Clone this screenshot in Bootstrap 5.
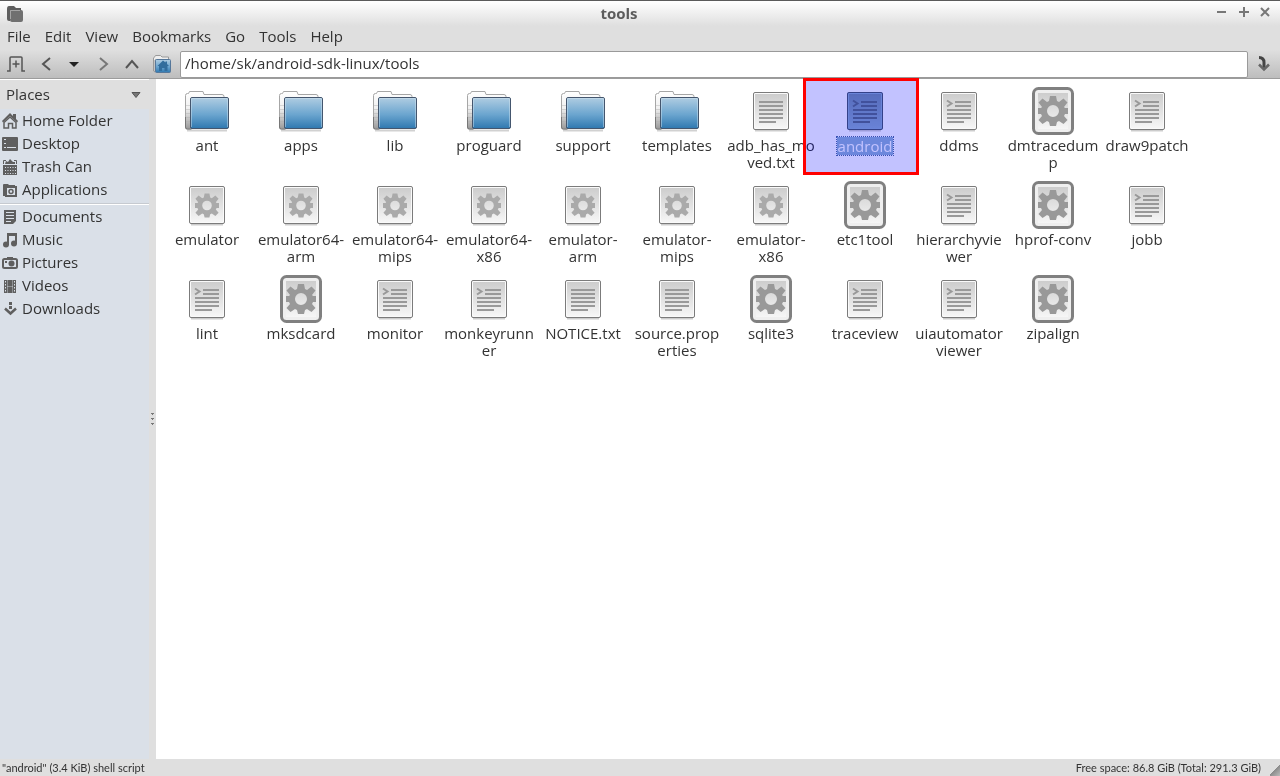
<!DOCTYPE html>
<html lang="en">
<head>
<meta charset="utf-8">
<meta name="viewport" content="width=device-width, initial-scale=1">
<title>tools</title>
<link href="https://cdn.jsdelivr.net/npm/bootstrap@5.3.0/dist/css/bootstrap.min.css" rel="stylesheet">
<style>
body { font-family: "Open Sans", "Noto Sans", sans-serif; font-size: 15px; line-height: 17px; color: #333; background: #dfdfdf; }
svg { display: block; flex: none; }
a, button { color: inherit; text-decoration: none; }
.titlebar { height: 26px; border-top: 1px solid #5a5a5a; background: linear-gradient(#fff, #dfdfdf); color: #5c5c5c; }
.titlebar h1 { font-size: 15px; line-height: 22px; padding-bottom: 2px; font-weight: 700; }
.app-icon { width: 32px; padding-left: 7px; }
.window-btns { width: 74px; column-gap: 8px; padding-right: 8px; }
.plain-btn { border: 0; background: none; padding: 0; }
.menubar { height: 24px; padding: 0 0 4px 7px; column-gap: 14px; }
.menubar .nav-link { padding: 0; color: #333; line-height: 20px; }
.toolbar { height: 29px; background: linear-gradient(#dfdfdf, #bdbdbd); border-bottom: 1px solid #9c9c9c; color: #555; }
.tool-btn { width: 32px; display: flex; justify-content: center; }
.tool-btn.narrow { width: 24px; }
.tool-btn.wide { width: 36px; }
.path-input { height: 27px; border: 1px solid #9a9a9a; border-radius: 2px; padding: 0 4px 2px; font-size: 15px; color: #333; background: #fff; min-width: 0; }
.workspace { min-height: 0; }
.sidebar { width: 149px; background: #dae0e8; }
.places-head { height: 30px; background: #dfdfdf; padding: 0 8px 0 6px; border-top: 1px solid #fff; }
.place-link { height: 23px; padding-left: 2px; column-gap: 4px; }
.place-sep { height: 2px; margin: 2px 0 0; border-top: 1px solid #c6cad0; border-bottom: 1px solid #fff; }
.place-link svg, .head-arrow { color: #5f5f5f; }
.split-handle { width: 7px; background: #dfdfdf; color: #777; }
.file-area { background: #fff; padding: 8px 0 0 4px; min-width: 0; }
.file-grid { display: grid; grid-template-columns: repeat(auto-fill, 94px); grid-auto-rows: 94px; align-content: start; }
.file-item { text-align: center; color: #333; }
.file-item .caption { display: inline-block; margin-top: 2px; white-space: nowrap; }
.file-item.selected .caption { background: #8fb2d1; color: #fff; outline: 1px dotted #4a6a9c; padding: 0 1px; line-height: 18px; }
.tint { fill: #8fb2d1; mix-blend-mode: multiply; }
.highlight-box { position: absolute; inset: -9px -7px 6px -15px; border: 3px solid #f00; background: rgba(0, 0, 255, .24); background-clip: padding-box; pointer-events: none; }
.statusbar { height: 17px; font-family: Lato, "Open Sans", sans-serif; font-size: 11px; line-height: 17px; padding-left: 2px; }
.grip { width: 11px; height: 11px; background: linear-gradient(135deg, transparent 50%, #8c8c8c 50%, #bbb); margin-left: 8px; }
</style>
</head>
<body class="vh-100 d-flex flex-column overflow-hidden">

<svg width="0" height="0" class="position-absolute" aria-hidden="true">
  <defs>
    <linearGradient id="blue" x1="0" y1="0" x2="0" y2="1"><stop offset="0" stop-color="#b0cde2"/><stop offset=".55" stop-color="#6ba5cf"/><stop offset="1" stop-color="#2f78b0"/></linearGradient>
    <linearGradient id="paper" x1="0" y1="0" x2="0" y2="1"><stop offset="0" stop-color="#cdcdcd"/><stop offset="1" stop-color="#f6f6f6"/></linearGradient>
    <linearGradient id="tabs" x1="0" y1="0" x2="0" y2="1"><stop offset="0" stop-color="#fff"/><stop offset=".45" stop-color="#f0f0f0"/><stop offset="1" stop-color="#999"/></linearGradient>
    <path id="cog" fill-rule="evenodd" d="M-3-15h6l1 5 2 1 4.500-3.500 4 4L11-4l1 1h3v6h-3l-1 2 3.500 4-4 4L6 10l-2 1-1 4h-6l-1-4-2-1-4.500 3-4-4 3.500-4-1-2h-3v-6h3l1-1-3.500-4.500 4-4L-6-9l2-1zM0-6a6 6 0 1 0 0 12A6 6 0 1 0 0-6z"/>
    <symbol id="folder" viewBox="0 0 48 48">
      <path d="M4 43.500h40" stroke="#000" stroke-opacity=".18" stroke-width="2"/>
      <path d="M2.500 41V8.500q0-2 2-2h1l1-2H20l1 3h18q2 0 2 2V12H9v30H4q-1.500 0-1.500-1z" fill="url(#tabs)" stroke="#a6a6a6"/>
      <path d="M3 18.500h4M3 22.500h4M3 26.500h4M3 30.500h4M3 34.500h4" stroke="#aaa" stroke-opacity=".4"/>
      <path d="M2.500 30v10q0 2 2 2H8" fill="none" stroke="#777"/>
      <rect x="7.500" y="10.500" width="38" height="31" rx="1.500" fill="url(#blue)" stroke="#44566e"/>
      <path d="M8.500 40V11.500h36V40" fill="none" stroke="#d5e6f2" stroke-opacity=".45"/>
    </symbol>
    <symbol id="sheet" viewBox="0 0 48 48">
      <path d="M8 43.500h32" stroke="#000" stroke-opacity=".2" stroke-width="2"/>
      <rect x="6.500" y="5.500" width="35" height="37" rx="1.500" fill="#fafafa" stroke="#7b7b7b"/>
      <rect x="8" y="7" width="32" height="34" fill="url(#paper)"/>
    </symbol>
    <symbol id="text" viewBox="0 0 48 48"><use href="#sheet"/>
      <path d="M12 15h24M12 19h24M12 23h24M12 27h24M12 31h24M12 35h17" stroke="#999" stroke-width="2"/></symbol>
    <symbol id="script" viewBox="0 0 48 48"><use href="#sheet"/>
      <path d="M20 15h16M20 19h16M12 23h24M12 27h24M12 31h24M12 35h17" stroke="#999" stroke-width="2"/>
      <path d="M12 13.500l4.500 3-4.500 3" fill="none" stroke="#999" stroke-width="2"/></symbol>
    <symbol id="binary" viewBox="0 0 48 48"><use href="#sheet"/>
      <use href="#cog" transform="translate(24 24.500) scale(.8)" fill="#aaa"/></symbol>
    <symbol id="exec" viewBox="0 0 48 48">
      <rect x="4.500" y="1.500" width="39" height="45" rx="5" fill="#efefef" stroke="#808080" stroke-width="3"/>
      <rect x="9" y="6" width="30" height="36" fill="url(#paper)"/>
      <use href="#cog" transform="translate(24 24)" fill="#999"/></symbol>
  </defs>
</svg>

<header>
  <div class="titlebar d-flex align-items-center justify-content-between">
    <div class="app-icon">
      <svg width="16" height="16" viewBox="0 0 16 16"><path d="M0 3q0-3 2-3h5l2 2h5v2H5q-2 0-2 2v9H2q-2 0-2-2z" fill="#5e5e5e"/><rect x="3" y="4" width="13" height="12" rx="2" fill="#707070"/><path d="M3.500 13V4.500H13" fill="none" stroke="#a5a5a5"/></svg>
    </div>
    <h1 class="m-0">tools</h1>
    <div class="window-btns d-flex align-items-center justify-content-end pb-1">
      <button class="plain-btn" aria-label="Minimize"><svg width="14" height="12" viewBox="0 0 14 12"><path d="M3 6h9" stroke="#777" stroke-width="2"/></svg></button>
      <button class="plain-btn" aria-label="Maximize"><svg width="14" height="12" viewBox="0 0 14 12"><path d="M3 6h10M8 1v10" stroke="#777" stroke-width="2"/></svg></button>
      <button class="plain-btn" aria-label="Close"><svg width="14" height="12" viewBox="0 0 14 12"><path d="M3 2l8 8M11 2l-8 8" stroke="#777" stroke-width="2"/></svg></button>
    </div>
  </div>
  <nav class="menubar nav align-items-center flex-nowrap">
    <a class="nav-link" href="#">File</a><a class="nav-link" href="#">Edit</a><a class="nav-link" href="#">View</a><a class="nav-link" href="#">Bookmarks</a><a class="nav-link" href="#">Go</a><a class="nav-link" href="#">Tools</a><a class="nav-link" href="#">Help</a>
  </nav>
  <div class="toolbar d-flex align-items-center ps-1">
    <button class="plain-btn tool-btn narrow" aria-label="New tab"><svg width="18" height="16" viewBox="0 0 18 16" fill="none" stroke="#555" stroke-width="1.500"><path d="M0 15h3V2q0-1 1-1h10q1 0 1 1v13h3M9 4.500v7M5.500 8h7"/></svg></button>
    <button class="plain-btn tool-btn wide" aria-label="Back"><svg width="10" height="14" viewBox="0 0 10 14"><path d="M9 1L2 7l7 6" fill="none" stroke="#555" stroke-width="2"/></svg></button>
    <button class="plain-btn tool-btn narrow" aria-label="History"><svg width="18" height="5" viewBox="0 0 18 5"><path d="M2 0h10L7 5z" fill="#222"/></svg></button>
    <button class="plain-btn tool-btn" aria-label="Forward"><svg width="10" height="14" viewBox="0 0 10 14"><path d="M1 1l7 6-7 6" fill="none" stroke="#777" stroke-width="2"/></svg></button>
    <button class="plain-btn tool-btn narrow" aria-label="Up"><svg width="14" height="10" viewBox="0 0 14 10"><path d="M1 9l6-7 6 7" fill="none" stroke="#555" stroke-width="2"/></svg></button>
    <button class="plain-btn tool-btn wide" aria-label="Home"><svg width="18" height="18" viewBox="0 0 18 18"><path d="M.5 16V3l1-1 1-1.500h5L9 2h6.500V5H2v12z" fill="#eee" stroke="#999"/><rect x="2.500" y="4.500" width="15" height="13" rx="1" fill="url(#blue)" stroke="#55779a"/><path d="M10 5.500L4.500 11H6v5h3v-3h2.500v3h3v-5H16l-2-2V6.500h-1.500v1z" fill="#316d9d"/></svg></button>
    <input class="path-input flex-fill" type="text" aria-label="Location" value="/home/sk/android-sdk-linux/tools">
    <button class="plain-btn tool-btn" aria-label="Go"><svg width="12" height="16" viewBox="0 0 12 16"><path d="M1 1.500q5 0 5 5V12" fill="none" stroke="#444" stroke-width="3"/><path d="M1 8.500l5 5 5-5" fill="none" stroke="#666" stroke-width="2.500"/></svg></button>
  </div>
</header>

<main class="workspace d-flex flex-fill">
  <aside class="sidebar flex-shrink-0">
    <button class="plain-btn places-head w-100 d-flex align-items-center justify-content-between"><span>Places</span>
      <svg class="head-arrow" width="10" height="6" viewBox="0 0 10 6"><path d="M1 .5h8L5 5.500z" fill="#777" stroke="#555"/></svg></button>
    <nav>
      <a href="#" class="place-link d-flex align-items-center"><svg width="16" height="16" viewBox="0 0 16 16" fill="currentColor"><path d="M8 0L0 8l1 1.500L8 3l7 6.500L16 8l-2-2V1h-3v2z"/><path d="M2 9.500l6-5.500 6 5.500V15h-3.500v-4.500h-4V15H2z" fill="none" stroke="currentColor" stroke-width="1.500"/></svg>Home Folder</a>
      <a href="#" class="place-link d-flex align-items-center"><svg width="16" height="16" viewBox="0 0 16 16" fill="currentColor"><path fill-rule="evenodd" d="M1 1h14q1 0 1 1v12q0 1-1 1H1q-1 0-1-1V2q0-1 1-1zm1 2v1h2V3zm0 4v1h2V7zm0 4v1h2v-1zm3 0v1h9v-1z"/></svg>Desktop</a>
      <a href="#" class="place-link d-flex align-items-center"><svg width="16" height="16" viewBox="0 0 16 16"><path d="M1.500 5V1.500H4M12 1.500h2.500V5" fill="none" stroke="currentColor"/><path d="M3 5l1-3 2 1 2-3 3 3 2 0v2zM1 6h14v10H1z" fill="currentColor"/><path d="M3 8.500h11M3 11.500h11M3 14.500h11" stroke="#dae0e8" stroke-dasharray="1 1.500"/></svg>Trash Can</a>
      <a href="#" class="place-link d-flex align-items-center"><svg width="16" height="16" viewBox="0 0 16 16"><path d="M1 14V3q0-1 1-1h4l1 1h6v2H4v9z" fill="currentColor"/><rect x="4" y="5" width="10" height="9" fill="#dae0e8" stroke="currentColor" stroke-width="2"/><circle cx="9" cy="9.500" r="2" fill="none" stroke="currentColor" stroke-width="1.500"/></svg>Applications</a>
      <div class="place-sep"></div>
      <a href="#" class="place-link d-flex align-items-center"><svg width="16" height="16" viewBox="0 0 16 16"><path d="M2 1h12v11l-3 3H2z" fill="currentColor"/><path d="M4 3.500h8M4 6.500h8M4 9.500h8M4 12.500h5" stroke="#dae0e8"/></svg>Documents</a>
      <a href="#" class="place-link d-flex align-items-center"><svg width="16" height="16" viewBox="0 0 16 16" fill="currentColor"><path d="M5 1h10v11h-2V4H7v9H5z"/><circle cx="4" cy="12.500" r="3"/><circle cx="12" cy="11.500" r="3"/></svg>Music</a>
      <a href="#" class="place-link d-flex align-items-center"><svg width="16" height="16" viewBox="0 0 16 16"><path d="M5 2h6v2H5z" fill="currentColor"/><rect x="1" y="4" width="14" height="9" rx="1.500" fill="none" stroke="currentColor" stroke-width="2"/><circle cx="9.500" cy="8.500" r="3" fill="currentColor"/><path d="M3 6h2v2H3z" fill="currentColor"/></svg>Pictures</a>
      <a href="#" class="place-link d-flex align-items-center"><svg width="16" height="16" viewBox="0 0 16 16"><path d="M2 2h12v13H2z" fill="currentColor"/><path d="M3.500 3v12M12.500 3v12" stroke="#dae0e8" stroke-dasharray="1.500 1.500"/><path d="M5.500 2v13M10.500 2v13M5 8.500h6" stroke="#dae0e8" stroke-width=".4"/></svg>Videos</a>
      <a href="#" class="place-link d-flex align-items-center"><svg width="16" height="16" viewBox="0 0 16 16"><path d="M7 1h3v3H7zM7 5h3v3H7z" fill="currentColor"/><path d="M3 7.500l5.500 5L14 7.500" fill="none" stroke="currentColor" stroke-width="2.500"/></svg>Downloads</a>
    </nav>
  </aside>
  <div class="split-handle d-flex align-items-center justify-content-center flex-shrink-0">
    <svg width="3" height="13" viewBox="0 0 3 13"><path d="M0 0h3v1H2v1H1V1H0zM0 5h3v1H2v1H1V6H0zM0 10h3v1H2v1H1v-1H0z" fill="currentColor"/></svg>
  </div>
  <section class="file-area flex-fill">
    <div class="file-grid">
      <a href="#" class="file-item"><svg class="mx-auto" width="48" height="48"><use href="#folder"/></svg><span class="caption">ant</span></a>
      <a href="#" class="file-item"><svg class="mx-auto" width="48" height="48"><use href="#folder"/></svg><span class="caption">apps</span></a>
      <a href="#" class="file-item"><svg class="mx-auto" width="48" height="48"><use href="#folder"/></svg><span class="caption">lib</span></a>
      <a href="#" class="file-item"><svg class="mx-auto" width="48" height="48"><use href="#folder"/></svg><span class="caption">proguard</span></a>
      <a href="#" class="file-item"><svg class="mx-auto" width="48" height="48"><use href="#folder"/></svg><span class="caption">support</span></a>
      <a href="#" class="file-item"><svg class="mx-auto" width="48" height="48"><use href="#folder"/></svg><span class="caption">templates</span></a>
      <a href="#" class="file-item"><svg class="mx-auto" width="48" height="48"><use href="#text"/></svg><span class="caption">adb_has_mo<br>ved.txt</span></a>
      <a href="#" class="file-item selected position-relative"><svg class="mx-auto" width="48" height="48"><use href="#script"/><rect class="tint" x="6" y="5" width="36" height="38" rx="2"/></svg><span class="caption">android</span><span class="highlight-box"></span></a>
      <a href="#" class="file-item"><svg class="mx-auto" width="48" height="48"><use href="#script"/></svg><span class="caption">ddms</span></a>
      <a href="#" class="file-item"><svg class="mx-auto" width="48" height="48"><use href="#exec"/></svg><span class="caption">dmtracedum<br>p</span></a>
      <a href="#" class="file-item"><svg class="mx-auto" width="48" height="48"><use href="#script"/></svg><span class="caption">draw9patch</span></a>

      <a href="#" class="file-item"><svg class="mx-auto" width="48" height="48"><use href="#binary"/></svg><span class="caption">emulator</span></a>
      <a href="#" class="file-item"><svg class="mx-auto" width="48" height="48"><use href="#binary"/></svg><span class="caption">emulator64-<br>arm</span></a>
      <a href="#" class="file-item"><svg class="mx-auto" width="48" height="48"><use href="#binary"/></svg><span class="caption">emulator64-<br>mips</span></a>
      <a href="#" class="file-item"><svg class="mx-auto" width="48" height="48"><use href="#binary"/></svg><span class="caption">emulator64-<br>x86</span></a>
      <a href="#" class="file-item"><svg class="mx-auto" width="48" height="48"><use href="#binary"/></svg><span class="caption">emulator-<br>arm</span></a>
      <a href="#" class="file-item"><svg class="mx-auto" width="48" height="48"><use href="#binary"/></svg><span class="caption">emulator-<br>mips</span></a>
      <a href="#" class="file-item"><svg class="mx-auto" width="48" height="48"><use href="#binary"/></svg><span class="caption">emulator-<br>x86</span></a>
      <a href="#" class="file-item"><svg class="mx-auto" width="48" height="48"><use href="#exec"/></svg><span class="caption">etc1tool</span></a>
      <a href="#" class="file-item"><svg class="mx-auto" width="48" height="48"><use href="#script"/></svg><span class="caption">hierarchyvie<br>wer</span></a>
      <a href="#" class="file-item"><svg class="mx-auto" width="48" height="48"><use href="#exec"/></svg><span class="caption">hprof-conv</span></a>
      <a href="#" class="file-item"><svg class="mx-auto" width="48" height="48"><use href="#script"/></svg><span class="caption">jobb</span></a>

      <a href="#" class="file-item"><svg class="mx-auto" width="48" height="48"><use href="#script"/></svg><span class="caption">lint</span></a>
      <a href="#" class="file-item"><svg class="mx-auto" width="48" height="48"><use href="#exec"/></svg><span class="caption">mksdcard</span></a>
      <a href="#" class="file-item"><svg class="mx-auto" width="48" height="48"><use href="#script"/></svg><span class="caption">monitor</span></a>
      <a href="#" class="file-item"><svg class="mx-auto" width="48" height="48"><use href="#script"/></svg><span class="caption">monkeyrunn<br>er</span></a>
      <a href="#" class="file-item"><svg class="mx-auto" width="48" height="48"><use href="#text"/></svg><span class="caption">NOTICE.txt</span></a>
      <a href="#" class="file-item"><svg class="mx-auto" width="48" height="48"><use href="#text"/></svg><span class="caption">source.prop<br>erties</span></a>
      <a href="#" class="file-item"><svg class="mx-auto" width="48" height="48"><use href="#exec"/></svg><span class="caption">sqlite3</span></a>
      <a href="#" class="file-item"><svg class="mx-auto" width="48" height="48"><use href="#script"/></svg><span class="caption">traceview</span></a>
      <a href="#" class="file-item"><svg class="mx-auto" width="48" height="48"><use href="#script"/></svg><span class="caption">uiautomator<br>viewer</span></a>
      <a href="#" class="file-item"><svg class="mx-auto" width="48" height="48"><use href="#exec"/></svg><span class="caption">zipalign</span></a>
    </div>
  </section>
</main>

<footer class="statusbar d-flex flex-shrink-0 justify-content-between">
  <span>"android" (3.4 KiB) shell script</span>
  <span class="d-flex align-items-end"><span>Free space: 86.8 GiB (Total: 291.3 GiB)</span><span class="grip"></span></span>
</footer>
<script src="https://cdn.jsdelivr.net/npm/bootstrap@5.3.0/dist/js/bootstrap.bundle.min.js"></script>
</body>
</html>
